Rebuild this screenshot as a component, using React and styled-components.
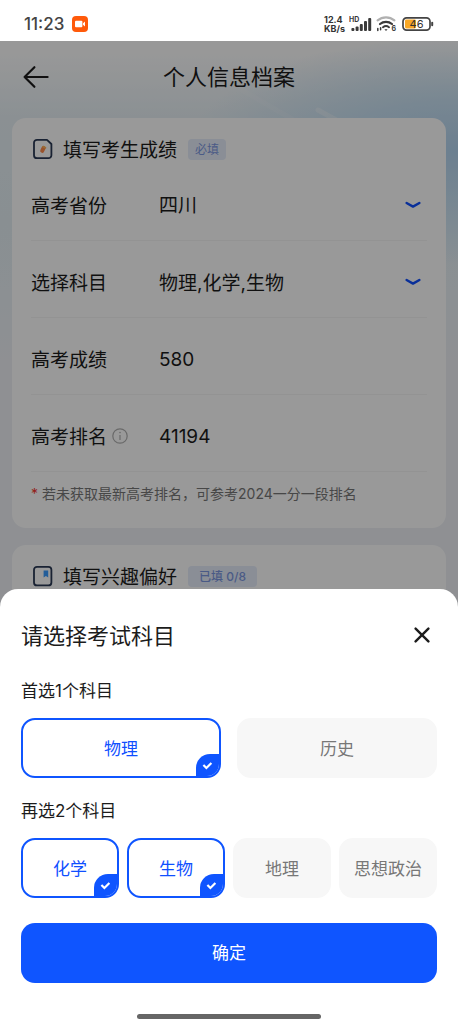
import React, {useState} from 'react'
import styled, {createGlobalStyle} from 'styled-components'

const fields = [
  {id: 'province', label: '高考省份', type: 'select', value: '四川'},
  {id: 'subjects', label: '选择科目', type: 'button'},
  {id: 'score', label: '高考成绩', type: 'input', value: '580'},
  {id: 'rank', label: '高考排名', type: 'input', value: '41194', info: true},
]
const primarySubjects = ['物理', '历史']
const secondarySubjects = ['化学', '生物', '地理', '思想政治']

const Chevron = () => (
  <svg width="16" height="8" viewBox="0 0 16 8" fill="none" aria-hidden="true">
    <path d="M1.6 2 L8 5.6 L14.4 2" stroke="#0f4fff" strokeWidth="2.4" strokeLinecap="round" strokeLinejoin="round"/>
  </svg>
)

const InfoIcon = () => (
  <svg width="16" height="16" viewBox="0 0 16 16" fill="none" stroke="#b0b0b0" aria-hidden="true">
    <circle cx="8" cy="8" r="7.2" strokeWidth="1.2"/>
    <path d="M8 7v5" strokeWidth="1.2"/>
    <circle cx="8" cy="4.6" r=".8" fill="#b0b0b0" stroke="none"/>
  </svg>
)

const ScoreIcon = () => (
  <svg width="24" height="24" viewBox="0 0 24 24" fill="none" aria-hidden="true">
    <path d="M6 2.8h10L20.4 7v11.2a3 3 0 0 1-3 3H6a3 3 0 0 1-3-3V5.8a3 3 0 0 1 3-3z" stroke="#2b3a55" strokeWidth="1.8" strokeLinejoin="round"/>
    <path d="M12.6 11l-1.4 2.8" stroke="#ff8a4a" strokeWidth="4" strokeLinecap="round"/>
    <path d="M12.2 9.6l2.2 1.2" stroke="#ffb45b" strokeWidth="1.8" strokeLinecap="round"/>
  </svg>
)

const HobbyIcon = () => (
  <svg width="24" height="24" viewBox="0 0 24 24" fill="none" aria-hidden="true">
    <rect x="3" y="2.8" width="17.4" height="18.6" rx="3" stroke="#2b3a55" strokeWidth="1.8"/>
    <path d="M12.6 6.4h4.6v7l-2.3-1.4-2.3 1.4z" fill="#3a9bff"/>
  </svg>
)

const RecordIcon = () => (
  <svg width="16" height="16" viewBox="0 0 16 16" aria-hidden="true">
    <rect width="16" height="16" rx="4" fill="#ff5a0a"/>
    <rect x="3" y="4.8" width="7.4" height="6.4" rx="1" fill="#fff"/>
    <path d="M11 7.2l2-1.6v4.8l-2-1.6z" fill="#fff"/>
  </svg>
)

const SignalIcon = () => (
  <svg width="23" height="16" viewBox="0 0 23 16" fill="#3a3a3a" aria-hidden="true">
    <text x="0" y="6" fontSize="7" fontWeight="700">HD</text>
    <rect x="2.4" y="12" width="3" height="3" rx="1"/>
    <rect x="6.6" y="10.4" width="3" height="4.6" rx="1"/>
    <rect x="10.8" y="8" width="3" height="7" rx="1"/>
    <rect x="15" y="5" width="3" height="10" rx="1"/>
    <rect x="19.2" y="2" width="3" height="13" rx="1"/>
  </svg>
)

const WifiIcon = () => (
  <svg width="22" height="18" viewBox="0 0 22 18" fill="none" strokeLinecap="round" aria-hidden="true">
    <path d="M1.6 5.4a13 13 0 0 1 16.8 0" stroke="#b0b0b0" strokeWidth="2.2"/>
    <path d="M4 9a9.4 9.4 0 0 1 12 0" stroke="#3a3a3a" strokeWidth="2.2"/>
    <path d="M7 12.2a5 5 0 0 1 6 0" stroke="#3a3a3a" strokeWidth="2"/>
    <path d="M8.4 14.2h3.2L10 16z" fill="#3a3a3a"/>
    <path d="M1.8 13.4v2.2M4.6 12.8v2" stroke="#3a3a3a" strokeWidth="1.5"/>
    <text x="15.6" y="16" fontSize="7" fontWeight="700" fill="#3a3a3a">6</text>
  </svg>
)

const BatteryIcon = () => (
  <svg width="32" height="14" viewBox="0 0 32 14" aria-hidden="true">
    <rect x="3" y="2.6" width="11" height="8.8" rx="1.4" fill="#f9a825"/>
    <rect x="1" y=".9" width="27" height="12.2" rx="3.6" fill="none" stroke="#444" strokeWidth="1.7"/>
    <rect x="29.2" y="4.8" width="2" height="4.4" rx="1" fill="#444"/>
    <text x="14.5" y="11" fontSize="11" textAnchor="middle" fill="#333">46</text>
  </svg>
)

const Tick = () => (
  <Corner>
    <svg width="11" height="9" viewBox="0 0 11 9" fill="none" aria-hidden="true">
      <path d="M1.4 4l3 3 5-5" stroke="#fff" strokeWidth="2.2"/>
    </svg>
  </Corner>
)

const Field = ({field, summary}) => (
  <Row>
    <RowLabel htmlFor={field.id}>
      {field.label}
      {field.info && <InfoIcon/>}
    </RowLabel>
    {field.type === 'select' && (
      <Select id={field.id} defaultValue={field.value}>
        <option>{field.value}</option>
      </Select>
    )}
    {field.type === 'button' && <ValueButton id={field.id} type="button">{summary}</ValueButton>}
    {field.type === 'input' && <Input id={field.id} defaultValue={field.value} inputMode="numeric"/>}
    {field.type !== 'input' && <Chevron/>}
  </Row>
)

const Choice = ({type, name, text, checked, onChange}) => (
  <Option $checked={checked}>
    <HiddenInput type={type} name={name} checked={checked} onChange={onChange}/>
    {text}
    {checked && <Tick/>}
  </Option>
)

const App = () => {
  const [primary, setPrimary] = useState('物理')
  const [secondary, setSecondary] = useState(['化学', '生物'])

  const toggle = (subject) => {
    if (secondary.includes(subject)) {
      setSecondary(secondary.filter((s) => s !== subject))
    } else if (secondary.length < 2) {
      setSecondary([...secondary, subject])
    }
  }

  return (
    <Screen>
      <GlobalStyle/>
      <StatusBar>
        <Clock>11:23</Clock>
        <RecordIcon/>
        <StatusIcons>
          <Speed><span>12.4</span><span>KB/s</span></Speed>
          <SignalIcon/>
          <WifiIcon/>
          <BatteryIcon/>
        </StatusIcons>
      </StatusBar>
      <Body>
        <Streaks width="220" height="90" viewBox="0 0 220 90" fill="none" stroke="#fff" strokeLinecap="round" aria-hidden="true">
          <path d="M2 48l52 30" strokeWidth="5" opacity=".12"/>
          <path d="M80 69l20 11" strokeWidth="5" opacity=".3"/>
        </Streaks>
        <Header>
          <IconButton type="button" aria-label="返回">
            <svg width="26" height="24" viewBox="0 0 26 24" fill="none" stroke="#1c1c1c" strokeWidth="2.2" strokeLinecap="round" strokeLinejoin="round">
              <path d="M11.4 2.2L1.6 12l9.8 9.8M1.6 12h23"/>
            </svg>
          </IconButton>
          <h1>个人信息档案</h1>
        </Header>
        <Cards>
          <Card>
            <CardHeader>
              <ScoreIcon/>
              <h2>填写考生成绩</h2>
              <Tag>必填</Tag>
            </CardHeader>
            {fields.map((field) => (
              <Field key={field.id} field={field} summary={[primary, ...secondary].join(',')}/>
            ))}
            <Note><i>*</i>若未获取最新高考排名，可参考2024一分一段排名</Note>
          </Card>
          <Card>
            <CardHeader>
              <HobbyIcon/>
              <h2>填写兴趣偏好</h2>
              <Tag $wide>已填 0/8</Tag>
            </CardHeader>
          </Card>
        </Cards>
        <Scrim/>
        <Sheet role="dialog" aria-labelledby="sheet-title">
          <SheetHeader>
            <h2 id="sheet-title">请选择考试科目</h2>
            <IconButton type="button" aria-label="关闭">
              <svg width="16" height="16" viewBox="0 0 16 16" fill="none" stroke="#1c1c1c" strokeWidth="2.4" strokeLinecap="round">
                <path d="M1.6 1.6l12.8 12.8M14.4 1.6L1.6 14.4"/>
              </svg>
            </IconButton>
          </SheetHeader>
          <Group>
            <legend>首选1个科目</legend>
            <Options $columns={2} $gap={16}>
              {primarySubjects.map((s) => (
                <Choice key={s} type="radio" name="primary" text={s} checked={primary === s} onChange={() => setPrimary(s)}/>
              ))}
            </Options>
          </Group>
          <Group>
            <legend>再选2个科目</legend>
            <Options $columns={4} $gap={8}>
              {secondarySubjects.map((s) => (
                <Choice key={s} type="checkbox" name="secondary" text={s} checked={secondary.includes(s)} onChange={() => toggle(s)}/>
              ))}
            </Options>
          </Group>
          <Confirm type="button">确定</Confirm>
          <HomeBar/>
        </Sheet>
      </Body>
    </Screen>
  )
}

const GlobalStyle = createGlobalStyle`
  * {
    box-sizing: border-box;
  }
  body {
    margin: 0;
    color: #1c1c1c;
  }
  body, button, input, select {
    font-family: Inter, "Noto Sans CJK SC", sans-serif;
  }
  h1, h2, p {
    margin: 0;
    font-weight: 400;
  }
  svg {
    display: block;
    flex-shrink: 0;
  }
`
const Screen = styled.div`
  display: flex;
  flex-direction: column;
  height: 100vh;
  background: #fff;
`
const StatusBar = styled.div`
  display: flex;
  align-items: center;
  gap: 8px;
  height: 41px;
  padding: 7px 24px 0;
`
const Clock = styled.span`
  font-size: 17px;
  font-weight: 500;
  color: #444;
`
const StatusIcons = styled.div`
  display: flex;
  align-items: center;
  gap: 4px;
  margin-left: auto;
`
const Speed = styled.div`
  display: flex;
  flex-direction: column;
  font-size: 9px;
  font-weight: 700;
  line-height: 9px;
  color: #333;
`
const Body = styled.main`
  position: relative;
  flex: 1;
  overflow: hidden;
  background:
    radial-gradient(ellipse 270px 115px at 100% 110px, #b4d4f0 0%, rgba(190, 220, 242, 0.75) 45%, rgba(220, 235, 246, 0) 100%),
    linear-gradient(#fefefe 10px, #e8f1f6 75px, #e4eff4 180px, #eef1f6 320px);
`
const Streaks = styled.svg`
  position: absolute;
  top: 0;
  right: 0;
`
const Header = styled.header`
  display: grid;
  grid-template-columns: 26px 1fr 26px;
  align-items: center;
  height: 71px;
  padding: 0 23px;
  h1 {
    padding-bottom: 4px;
    font-size: 22px;
    text-align: center;
  }
`
const IconButton = styled.button`
  padding: 0;
  border: 0;
  background: none;
  cursor: pointer;
`
const Cards = styled.div`
  display: grid;
  grid-template-columns: minmax(0, 1fr);
  gap: 17px;
  padding: 6px 12px;
`
const Card = styled.section`
  padding: 16px 19px;
  border-radius: 14px;
  background: #fff;
`
const CardHeader = styled.div`
  display: flex;
  align-items: center;
  gap: 8px;
  height: 30px;
  h2 {
    padding-bottom: 2px;
    font-size: 19px;
  }
`
const Tag = styled.span`
  margin-left: 3px;
  padding: 0 ${(props) => (props.$wide ? '11px' : '7px')};
  border-radius: 4px;
  background: #e6edfb;
  color: #7c97e0;
  font-size: 12px;
  font-weight: ${(props) => (props.$wide ? 500 : 400)};
  line-height: 21px;
`
const Row = styled.div`
  display: flex;
  align-items: center;
  height: 77px;
  padding: 5px 6px 0 0;
  border-bottom: 1px solid #f5f5f5;
`
const RowLabel = styled.label`
  display: flex;
  align-items: center;
  gap: 5px;
  width: 128px;
  font-size: 19px;
`
const Input = styled.input`
  flex: 1;
  min-width: 0;
  padding: 2px 0 0;
  border: 0;
  background: none;
  color: inherit;
  font-size: 19px;
`
const Select = styled.select`
  flex: 1;
  min-width: 0;
  appearance: none;
  padding: 2px 0 0;
  border: 0;
  background: none;
  color: inherit;
  font-size: 19px;
`
const ValueButton = styled.button`
  flex: 1;
  padding: 0;
  border: 0;
  background: none;
  color: inherit;
  font-size: 19px;
  text-align: left;
`
const Note = styled.p`
  padding: 12px 0 8px;
  color: #777;
  font-size: 14px;
  line-height: 20px;
  i {
    margin-right: 4px;
    color: #f5342c;
    font-style: normal;
  }
`
const Scrim = styled.div`
  position: absolute;
  inset: 0;
  background: rgba(0, 0, 0, 0.4);
`
const Sheet = styled.div`
  position: absolute;
  right: 0;
  bottom: 0;
  left: 0;
  padding: 24px 21px 5px;
  border-radius: 18px 18px 0 0;
  background: #fff;
`
const SheetHeader = styled.div`
  display: flex;
  align-items: center;
  justify-content: space-between;
  height: 45px;
  padding: 0 7px 2px 0;
  h2 {
    padding-bottom: 2px;
    font-size: 22px;
  }
`
const Group = styled.fieldset`
  margin: 21px 0 0;
  padding: 0;
  border: 0;
  legend {
    padding: 0;
    margin-bottom: 15px;
    font-size: 17px;
    line-height: 24px;
  }
`
const Options = styled.div`
  display: grid;
  grid-template-columns: repeat(${(props) => props.$columns}, 1fr);
  gap: ${(props) => props.$gap}px;
`
const Option = styled.label`
  position: relative;
  display: flex;
  align-items: center;
  justify-content: center;
  height: 60px;
  padding-bottom: 2px;
  overflow: hidden;
  border: 2px solid ${(props) => (props.$checked ? '#0f55ff' : '#f7f7f7')};
  border-radius: 14px;
  background: ${(props) => (props.$checked ? '#fff' : '#f7f7f7')};
  color: ${(props) => (props.$checked ? '#0f4fff' : '#777')};
  font-size: 17px;
  cursor: pointer;
`
const HiddenInput = styled.input`
  position: absolute;
  margin: 0;
  opacity: 0;
`
const Corner = styled.span`
  position: absolute;
  right: 0;
  bottom: 0;
  display: flex;
  align-items: center;
  justify-content: center;
  width: 23px;
  height: 22px;
  border-top-left-radius: 14px;
  background: #0f55ff;
`
const Confirm = styled.button`
  display: block;
  width: 100%;
  height: 60px;
  margin-top: 25px;
  padding-bottom: 4px;
  border: 0;
  border-radius: 14px;
  background: #0f55ff;
  color: #fff;
  font-size: 17px;
  cursor: pointer;
`
const HomeBar = styled.div`
  width: 184px;
  height: 5px;
  margin: 31px auto 0;
  border-radius: 3px;
  background: #666;
`

export default App
